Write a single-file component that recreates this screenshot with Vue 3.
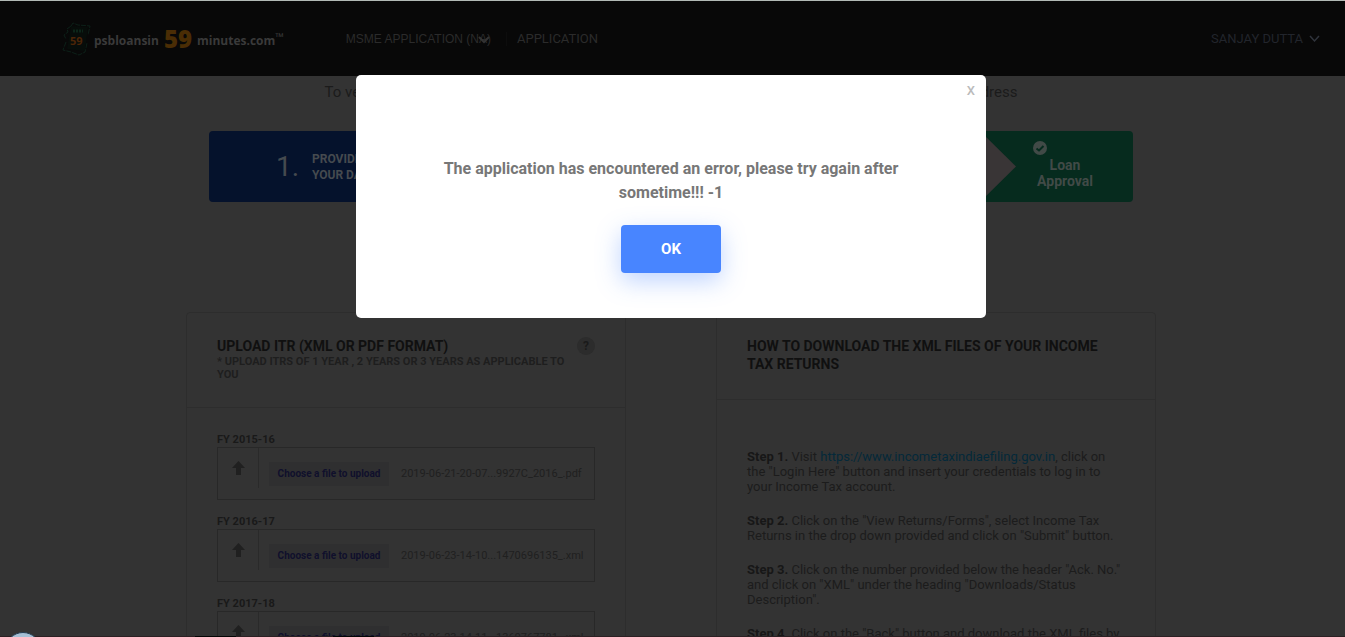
<script setup>
const files = [
  { year: 'FY 2015-16', name: '2019-06-21-20-07...9927C_2016_.pdf' },
  { year: 'FY 2016-17', name: '2019-06-23-14-10...1470696135_.xml' },
  { year: 'FY 2017-18', name: '2019-06-23-14-11...1360767781_.xml' },
]
</script>

<template>
  <div class="page">
    <header class="topbar">
      <a class="logo" href="#">
        <svg class="mark" width="30" height="36" viewBox="0 0 30 36" fill="none">
          <path d="M9 5 11 2l5 2 12 1-2 9M9 5 5 8l1 3-4 3 2 4M4 21 1 29l8 2 8 3 6-3 2-9" stroke="#0c2018" stroke-dasharray="5 1" />
          <path d="M9 5 26 6 23 30 5 28Z" fill="#070d0a" />
          <path d="M11 10h10" stroke="#0c2619" stroke-width="3" stroke-dasharray="2 1" />
          <text x="8" y="24" class="mark-num">59</text>
        </svg>
        <span class="word">psbloansin</span>
        <span class="num">59</span>
        <span class="word">minutes.com</span>
        <span class="tm">™</span>
      </a>
      <nav class="nav">
        <a href="#" class="nav-item first">MSME APPLICATION (NA)
          <svg class="nav-chevron" width="12" height="8" viewBox="0 0 12 8" fill="none"><path d="m1 1 5 5 5-5" stroke="#333" stroke-width="2" /></svg>
        </a>
        <a href="#" class="nav-item">APPLICATION</a>
      </nav>
      <button class="user" type="button">
        SANJAY DUTTA
        <svg width="11" height="8" viewBox="0 0 11 8" fill="none"><path d="m1 1 4.500 5 4.500-5" stroke="#30343c" stroke-width="1.500" /></svg>
      </button>
    </header>

    <main class="content">
      <p class="lead"><span>To verify</span><span>address</span></p>

      <div class="steps">
        <div class="step current">
          <span class="step-no">1.</span>
          <strong>PROVIDE<br />YOUR DATA</strong>
        </div>
        <div class="step middle"></div>
        <div class="step done">
          <svg class="arrow" width="36" height="71" viewBox="0 0 36 71"><path d="M0 0 36 35.500 0 71Z" fill="#393536" /></svg>
          <div class="done-text">
            <svg class="check" width="14" height="14" viewBox="0 0 14 14"><circle cx="7" cy="7" r="7" fill="#414a47" /><path d="m3.500 7.500 2.500 2L10.500 5" fill="none" stroke="#062b1e" stroke-width="2" /></svg>
            <strong>Loan<br />Approval</strong>
          </div>
        </div>
      </div>

      <div class="panels">
        <section class="panel">
          <div class="panel-head">
            <div>
              <h2>UPLOAD ITR (XML OR PDF FORMAT)</h2>
              <p class="note">* UPLOAD ITRS OF 1 YEAR , 2 YEARS OR 3 YEARS AS APPLICABLE TO YOU</p>
            </div>
            <button class="help" type="button">?</button>
          </div>
          <div class="uploads">
            <div v-for="file in files" :key="file.year" class="upload">
              <h3>{{ file.year }}</h3>
              <div class="file-box">
                <span class="up">
                  <svg width="13" height="14" viewBox="0 0 13 14"><path d="M6.500 0 13 7H9v7H4V7H0Z" fill="#202020" /></svg>
                </span>
                <button class="choose" type="button">Choose a file to upload</button>
                <span class="file-name">{{ file.name }}</span>
              </div>
            </div>
          </div>
        </section>

        <section class="panel">
          <div class="panel-head">
            <h2>HOW TO DOWNLOAD THE XML FILES OF YOUR INCOME TAX RETURNS</h2>
          </div>
          <div class="guide">
            <p><b>Step 1.</b> Visit <a href="#">https://www.incometaxindiaefiling.gov.in</a>, click on the "Login Here" button and insert your credentials to log in to your Income Tax account.</p>
            <p><b>Step 2.</b> Click on the "View Returns/Forms", select Income Tax Returns in the drop down provided and click on "Submit" button.</p>
            <p><b>Step 3.</b> Click on the number provided below the header "Ack. No." and click on "XML" under the heading "Downloads/Status Description".</p>
            <p><b>Step 4.</b> Click on the "Back" button and download the XML files by</p>
          </div>
        </section>
      </div>
    </main>

    <div class="bottom-edge"><i></i><i></i></div>
    <div class="orb"></div>

    <div class="backdrop">
      <div class="modal" role="alertdialog" aria-modal="true" aria-labelledby="error-message">
        <button class="close" type="button">X</button>
        <p id="error-message" class="message">The application has encountered an error, please try again after sometime!!! -1</p>
        <button class="ok" type="button">OK</button>
      </div>
    </div>
  </div>
</template>

<style>
body { margin: 0; background: #333; }
</style>

<style scoped>
* { box-sizing: border-box; }
h2, h3, p { margin: 0; }
a { text-decoration: none; color: inherit; }
button { font: inherit; border: 0; padding: 0; cursor: pointer; }
.page {
  position: relative;
  height: 100vh;
  overflow: hidden;
  background: #333;
  font-family: Roboto, "Liberation Sans", sans-serif;
  color: #1b1b1b;
}
.topbar {
  display: flex;
  align-items: center;
  height: 76px;
  padding: 0 25px 0 62px;
  border-top: 1px solid #b2b9b5;
  background: #080808;
  color: #2b2b2b;
  font-size: 13px;
}
.logo {
  display: flex;
  align-items: center;
  gap: 5px;
  font-family: "Open Sans", sans-serif;
  font-weight: 700;
  font-size: 12px;
  color: #3a3a3a;
}
.mark { margin-right: -3px; }
.mark-num { font: 700 11px "Open Sans", sans-serif; fill: #4c2507; }
.word { padding-top: 3px; }
.num { font-size: 24px; font-weight: 800; color: #4a2d05; line-height: 32px; }
.tm { margin-left: -5px; padding-bottom: 4px; font-size: 11px; }
.nav { display: flex; align-items: center; flex: 1; margin-left: 62px; }
.nav-item { position: relative; padding-left: 10px; }
.nav-item.first { padding: 0 15px 0 0; border-right: 1px solid #0d0d0d; font-family: "Liberation Sans", sans-serif; font-size: 12px; }
.nav-chevron { position: absolute; right: 16px; top: 4px; }
.user { display: flex; align-items: center; gap: 6px; background: none; color: #22252c; }
.content { padding-right: 3px; }
.lead {
  display: flex;
  justify-content: space-between;
  max-width: 693px;
  margin: 0 auto;
  padding-top: 4px;
  font-size: 15px;
  line-height: 24px;
}
.steps { display: flex; max-width: 924px; height: 71px; margin: 27px auto 0; border-radius: 4px; overflow: hidden; }
.step { display: flex; align-items: center; color: #454a4f; }
.step.current { flex: 1; padding-left: 67px; background: #05122c; font-size: 12px; line-height: 16px; }
.step-no { width: 36px; font-size: 28px; }
.step.middle { flex: 2; background: #393536; }
.step.done { width: 153px; background: #062b1e; font-size: 14px; line-height: 16px; color: #414a47; }
.done-text { position: relative; width: 98px; padding-top: 12px; text-align: center; }
.check { position: absolute; left: 17px; top: -4px; }
.panels { display: flex; gap: 90px; max-width: 970px; margin: 110px auto 0; }
.panel { flex: 1; min-width: 0; height: 440px; border: 1px solid #2d2d2d; border-radius: 4px; }
.panel-head {
  display: flex;
  justify-content: space-between;
  padding: 24px 30px 26px;
  border-bottom: 1px solid #2d2d2d;
}
h2 { font-size: 14px; line-height: 18px; font-weight: 700; color: #101010; }
.note { font-size: 11px; line-height: 13px; font-weight: 700; color: #1e1e1e; }
.help { flex: none; width: 18px; height: 18px; border-radius: 50%; background: #2c2c2c; color: #1a1a1a; font-size: 12px; font-weight: 700; }
.uploads { padding: 24px 30px; }
.upload { margin-bottom: 14px; }
h3 { font-size: 11px; line-height: 15px; font-weight: 700; color: #191919; }
.file-box { display: flex; align-items: center; height: 53px; border: 1px solid #282828; }
.up { display: flex; align-items: center; justify-content: center; align-self: flex-start; flex: none; width: 41px; height: 40px; border-right: 1px solid #2a2a2a; }
.choose { flex: none; width: 120px; height: 24px; margin: 0 12px 0 10px; background: #2f2f30; color: #10102c; font-size: 10px; font-weight: 700; }
.file-name { font-size: 11px; color: #202020; white-space: nowrap; }
.guide { padding: 49px 30px; font-size: 13px; line-height: 15px; color: #1c1c1c; }
.guide p { margin-bottom: 19px; }
.guide b { font-weight: 700; color: #171717; }
.guide a { color: #04293a; }
.bottom-edge { position: absolute; left: 0; right: 0; bottom: 0; display: flex; gap: 97px; height: 1px; padding-left: 195px; background: #2c2023; }
.bottom-edge i { width: 41px; background: #050505; }
.orb { position: absolute; left: 5px; bottom: -31px; width: 36px; height: 36px; border: 1px solid #243c50; border-radius: 50%; background: #a5bfd4; }
.backdrop { position: absolute; inset: 0; padding: 75px 3px 0 0; }
.modal {
  position: relative;
  max-width: 630px;
  margin: 0 auto;
  padding: 82px 80px 45px;
  border-radius: 5px;
  background: #fff;
  text-align: center;
}
.close { position: absolute; right: 11px; top: 8px; background: none; color: #bbb; font-size: 13px; line-height: 16px; font-weight: 500; }
.message { font-size: 16px; line-height: 24px; font-weight: 700; color: #777; }
.ok {
  width: 100px;
  height: 48px;
  margin-top: 20px;
  border-radius: 4px;
  background: #4885ff;
  box-shadow: 0 8px 24px rgba(72, 133, 255, 0.35);
  color: #fff;
  font-size: 15px;
  font-weight: 700;
  vertical-align: top;
}
</style>
